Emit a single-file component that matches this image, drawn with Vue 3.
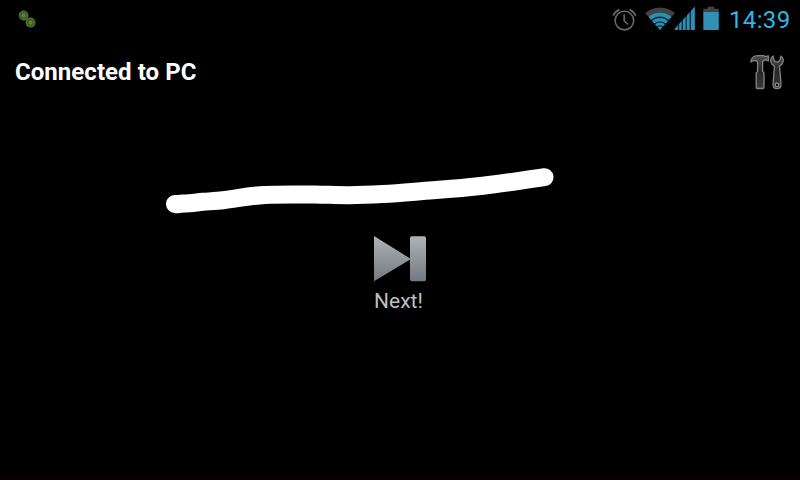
<script setup>
const time = '14:39'
const bars = [
  { x: 2, w: 2.8 },
  { x: 6.2, w: 2.4 },
  { x: 10, w: 2.6 },
  { x: 13.8, w: 2.8 },
  { x: 18, w: 3.8 },
]
</script>

<template>
  <main class="screen">
    <header class="status">
      <svg class="link" width="20" height="20" viewBox="0 0 20 20">
        <g fill="#2f5a00" stroke="#535b51" stroke-width="2">
          <circle cx="5.6" cy="5.5" r="4" />
          <circle cx="12.6" cy="12.6" r="4" />
        </g>
        <path d="M5 9.5C8 9.8 10 8.2 13 8.6" fill="none" stroke="#535b51" stroke-width="1.8" />
        <g fill="#4b9300"><circle cx="5.6" cy="5.5" r="2.2" /><circle cx="12.6" cy="12.6" r="2.2" /></g>
      </svg>
      <div class="indicators">
        <svg width="120" height="38" viewBox="606 0 120 38">
          <g fill="none" stroke="#696969" stroke-width="1.6">
            <circle cx="624.4" cy="20.6" r="9.3" />
            <path d="M624.2 14.5V21L628 24.5" />
            <path d="M613.2 15.6Q615 11.5 619.3 9.6M629.6 9.6Q634 11.5 635.7 15.6" stroke-width="1.8" />
          </g>
          <defs>
            <clipPath id="fan"><path d="M660 30L644.8 12.8V5H675.2V12.8Z" /></clipPath>
            <clipPath id="ramp"><path d="M673.5 30L695 6.5V30Z" /></clipPath>
          </defs>
          <g clip-path="url(#fan)" fill="none">
            <circle cx="660" cy="30" r="20" stroke="#424242" stroke-width="5" />
            <circle cx="660" cy="30" r="10" stroke="#0c2834" stroke-width="14" />
            <g stroke="#2990b8">
              <circle cx="660" cy="30" r="15.4" stroke-width="4" />
              <circle cx="660" cy="30" r="10.4" stroke-width="3.2" />
              <circle cx="660" cy="30" r="6.1" stroke-width="2.6" />
            </g>
            <circle cx="660" cy="30" r="3.5" fill="#2990b8" />
          </g>
          <g clip-path="url(#ramp)">
            <rect x="673" y="6" width="22" height="24" fill="#0d2f3d" />
            <rect v-for="b in bars" :key="b.x" :x="673 + b.x" y="6" :width="b.w" height="24" fill="#2990b8" />
          </g>
          <path d="M703.3 12V8.8H707.6V6.8H714.2V8.8H718.8V12Z" fill="#424242" />
          <rect x="703.3" y="12" width="15.5" height="18" fill="#3091b5" />
        </svg>
        <time class="clock">{{ time }}</time>
      </div>
    </header>

    <section class="titlebar">
      <h1>Connected to PC</h1>
      <svg class="tools" width="38" height="40" viewBox="748 52 38 40">
        <defs>
          <linearGradient id="metal" x1="0" y1="0" x2="0" y2="1">
            <stop offset="0" stop-color="#4c4c4c" />
            <stop offset=".5" stop-color="#262626" />
            <stop offset="1" stop-color="#3d3d3d" />
          </linearGradient>
        </defs>
        <g fill="url(#metal)" stroke="#858585" stroke-width="1.3" stroke-linejoin="round">
          <path d="M750.8 62C751.4 57.8 754.4 55.6 758 55.6H763.8L765.3 56.7L768.4 55.8V60.8L765.3 59.7L762.6 61.4V71.3L764 73.2V87.2Q764 88.5 762.7 88.5H757.6Q756.2 88.5 756.2 87.2V73.2L757.6 71.3V61.7C755.2 59.9 752.8 60.3 750.8 62Z" />
          <path d="M773.1 56C770.2 57.4 770 61.8 771.9 64L774.5 66.3L773 84Q772.8 88.6 777 88.6T781 84L779.5 66.3L782 64C784 61.8 783.7 57.4 780.8 56L780 60.2L778.4 61.8H775.5L773.9 60.2Z" />
        </g>
        <circle cx="777" cy="84.9" r="1.8" fill="#080808" stroke="#999" stroke-width="1.1" />
      </svg>
    </section>

    <section class="pad">
      <button class="next">
        <svg width="54" height="48" viewBox="373 235 54 48">
          <defs>
            <linearGradient id="silver" gradientUnits="userSpaceOnUse" x1="0" y1="236" x2="0" y2="281">
              <stop offset="0" stop-color="#b0b2b5" />
              <stop offset="1" stop-color="#737a80" />
            </linearGradient>
          </defs>
          <path d="M374 236L411 259L374 281.3Z" fill="url(#silver)" />
          <rect x="410" y="236.2" width="16" height="45" rx="1.8" fill="url(#silver)" />
        </svg>
        <span>Next!</span>
      </button>
      <svg class="stroke" width="800" height="120" viewBox="0 120 800 120">
        <path
          d="M175 204L177 204.2L183 203.5C189 203.7 197 202.3 203 201.8C208 201.4 217 201 223 200.3C236 198.8 249 195.8 265 194.9C280 194.1 297 194.4 315 194.5C328 194.7 338 195.3 350 195.2C362 195.2 372 194.7 383 194.1C400 193.1 416 191.5 433 190.2C450 189 467 187.7 483 185.8C504 183.4 524 179.9 544.5 177.2"
          fill="none" stroke="#fff" stroke-width="18" stroke-linecap="round" stroke-linejoin="round"
        />
      </svg>
    </section>
    <footer class="edge"></footer>
  </main>
</template>

<style>
body {
  background: #000;
}
</style>

<style scoped>
.screen {
  display: flex;
  flex-direction: column;
  width: 800px;
  height: 480px;
  overflow: hidden;
  background: #000;
  color: #fff;
  font-family: Roboto, "Liberation Sans", sans-serif;
}
svg {
  display: block;
}
.status {
  display: flex;
  justify-content: space-between;
  height: 38px;
  padding: 0 10px 0 18px;
}
.link {
  margin-top: 10px;
}
.indicators {
  display: flex;
  align-items: center;
  gap: 3px;
}
.clock {
  width: 61px;
  color: #33b5e5;
  font-size: 24px;
  letter-spacing: 0.35px;
  line-height: 38px;
  white-space: nowrap;
  padding-top: 2px;
}
.titlebar {
  display: flex;
  justify-content: space-between;
  height: 68px;
  padding: 14px 14px 0 15px;
  box-sizing: border-box;
}
h1 {
  margin: 4px 0 0;
  font-size: 24px;
  line-height: 32px;
  font-weight: 700;
  letter-spacing: 0.05px;
}
.pad {
  position: relative;
  flex: 1;
  display: flex;
  justify-content: center;
  align-items: flex-start;
  padding-top: 129px;
}
.next {
  display: flex;
  flex-direction: column;
  align-items: center;
  padding: 0;
  border: 0;
  background: none;
  color: #bebebe;
  font: 21px/28px Roboto, "Liberation Sans", sans-serif;
}
.next span {
  margin-top: 4px;
  padding-right: 3px;
}
.stroke {
  position: absolute;
  left: 0;
  top: 14px;
}
.edge {
  height: 4px;
  background: #0b0004;
}
</style>
